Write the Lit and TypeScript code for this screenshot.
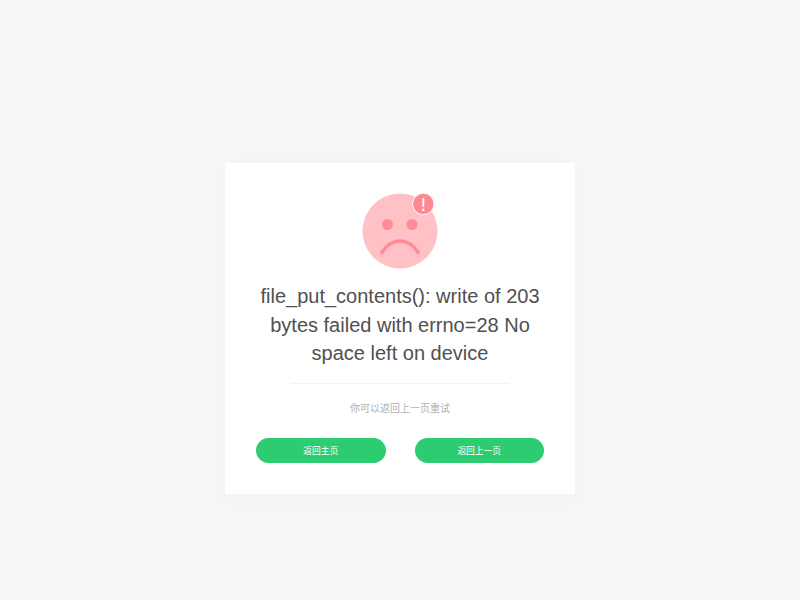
import { LitElement, html, css } from "lit";
import { customElement } from "lit/decorators.js";

@customElement("app-root")
export class AppRoot extends LitElement {
  static styles = css`
    :host {
      display: flex;
      align-items: flex-start;
      justify-content: center;
      height: 600px;
      background: #f4f6f8;
      font-family: "Liberation Sans", "Noto Sans CJK SC", sans-serif;
    }
    .card {
      box-sizing: border-box;
      width: 350px;
      height: 331px;
      margin-top: 163px;
      padding-top: 30px;
      background: #fff;
      box-shadow: 0 4px 20px rgba(0, 0, 0, 0.02);
      display: flex;
      flex-direction: column;
      align-items: center;
    }
    .icon {
      display: block;
      width: 76px;
      height: 76px;
    }
    h1 {
      margin: 13px 0 0;
      width: 290px;
      font-size: 20px;
      line-height: 28.6px;
      font-weight: 400;
      color: #505050;
      text-align: center;
    }
    .divider {
      width: 218px;
      height: 1px;
      margin-top: 15px;
      background: #f3f3f3;
    }
    .hint {
      margin-top: 18px;
      font-size: 10px;
      line-height: 14px;
      color: #b0b0b0;
    }
    .actions {
      box-sizing: border-box;
      width: 100%;
      padding: 0 31px;
      margin-top: 22px;
      display: flex;
      justify-content: space-between;
    }
    .btn {
      width: 129.5px;
      height: 25px;
      border-radius: 13px;
      background: #2ecc71;
      color: #fff;
      font-size: 8.75px;
      display: flex;
      align-items: center;
      justify-content: center;
      text-decoration: none;
    }
  `;

  render() {
    return html`
      <div class="card">
        <svg class="icon" viewBox="0 0 76 76" aria-hidden="true">
          <circle cx="38" cy="38" r="37.5" fill="#ffc1c6" />
          <circle cx="25.5" cy="31.5" r="5.5" fill="#ff8d96" />
          <circle cx="50" cy="31.5" r="5.5" fill="#ff8d96" />
          <path d="M20 59.5 C 24 52.5, 31 48, 38 48 C 45 48, 52 52.5, 56 59.5" fill="none" stroke="#ff8d96" stroke-width="3.6" stroke-linecap="round" />
          <circle cx="61.3" cy="11" r="10.7" fill="#ff8791" stroke="#fff" stroke-width="1" />
          <rect x="60.3" y="5" width="2" height="9" rx="1" fill="#fff" />
          <circle cx="61.3" cy="16.8" r="1.2" fill="#fff" />
        </svg>
        <h1>file_put_contents(): write of 203 bytes failed with errno=28 No space left on device</h1>
        <div class="divider"></div>
        <div class="hint">你可以返回上一页重试</div>
        <div class="actions">
          <a class="btn">返回主页</a>
          <a class="btn">返回上一页</a>
        </div>
      </div>
    `;
  }
}
